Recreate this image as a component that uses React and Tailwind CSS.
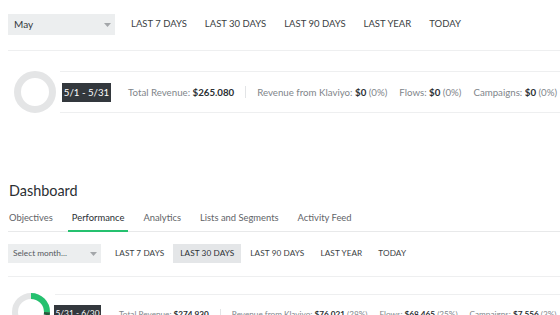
const FONT = { fontFamily: 'Lato, "Open Sans", sans-serif' }

function Ring({ size, stroke, segments = [] }) {
  const r = (size - stroke) / 2
  const c = 2 * Math.PI * r
  let offset = 0
  return (
    <svg width={size} height={size} viewBox={`0 0 ${size} ${size}`} className="flex-shrink-0">
      <circle cx={size / 2} cy={size / 2} r={r} fill="none" stroke="#e4e5e6" strokeWidth={stroke} />
      {segments.map((s, i) => {
        const len = c * s.pct
        const el = (
          <circle
            key={i}
            cx={size / 2}
            cy={size / 2}
            r={r}
            fill="none"
            stroke={s.color}
            strokeWidth={stroke}
            strokeDasharray={`${len} ${c - len}`}
            strokeDashoffset={-offset}
            transform={`rotate(-90 ${size / 2} ${size / 2})`}
          />
        )
        offset += len
        return el
      })}
    </svg>
  )
}

function Caret() {
  return (
    <svg width="7" height="4" viewBox="0 0 7 4">
      <path d="M0 0h7L3.5 4z" fill="#a3a6a9" />
    </svg>
  )
}

function Stat({ label, value, pct }) {
  return (
    <span className="whitespace-nowrap text-[#80858a]">
      {label} <b className="font-bold text-[#2b2f33]">{value}</b>
      {pct && <span> {pct}</span>}
    </span>
  )
}

const RANGES = ['LAST 7 DAYS', 'LAST 30 DAYS', 'LAST 90 DAYS', 'LAST YEAR', 'TODAY']

export default function App() {
  return (
    <div className="w-[560px] h-[315px] overflow-hidden bg-white" style={FONT}>
      {/* first state */}
      <div className="pl-[8px] pt-[14px]">
        <div className="flex items-center">
          <div className="w-[107px] h-[21px] bg-[#eceeef] flex items-center justify-between pl-[6px] pr-[4px] text-[10px] text-[#33373b]">
            May
            <Caret />
          </div>
          <div className="flex gap-[18px] ml-[16px] text-[9.5px] text-[#3a3e42]">
            {RANGES.map(r => <span key={r}>{r}</span>)}
          </div>
        </div>
        <div className="mt-[15px] h-px bg-[#eeeff0]" />
        <div className="flex items-center mt-[20px]">
          <div className="ml-[6px]">
            <Ring size={42} stroke={7} />
          </div>
          <div className="ml-[4px] flex-1 h-[42px] border-y border-[#eeeff0] flex items-center text-[9.7px] whitespace-nowrap">
            <span className="ml-[2px] bg-[#33383d] text-white w-[49px] justify-center h-[19px] flex items-center text-[9.7px]">5/1 - 5/31</span>
            <span className="ml-[17px]"><Stat label="Total Revenue:" value="$265.080" /></span>
            <span className="mx-[11px] w-px h-[12px] bg-[#e2e4e6]" />
            <Stat label="Revenue from Klaviyo:" value="$0" pct="(0%)" />
            <span className="ml-[12px]"><Stat label="Flows:" value="$0" pct="(0%)" /></span>
            <span className="ml-[12px]"><Stat label="Campaigns:" value="$0" pct="(0%)" /></span>
          </div>
        </div>
      </div>

      {/* second state */}
      <div className="mt-[68px] pl-[8px]">
        <h1 className="pl-[1px] text-[14.4px] leading-[20px] text-[#2b2f33]">Dashboard</h1>
        <div className="mt-[7px] border-b border-[#e8e9ea] flex gap-[11px] text-[9.4px] text-[#5f6468]">
          {['Objectives', 'Performance', 'Analytics', 'Lists and Segments', 'Activity Feed'].map((t, i) => (
            <span
              key={t}
              className={
                (i === 0 ? 'pl-[1px] pr-[4px] ' : 'px-[4px] ') +
                'pb-[5px] pt-[3px] border-b-2 -mb-px ' +
                (t === 'Performance' ? 'border-[#25c16f] text-[#2b2f33]' : 'border-transparent')
              }
            >
              {t}
            </span>
          ))}
        </div>
        <div className="flex items-center mt-[12px]">
          <div className="w-[93px] h-[19px] bg-[#eceeef] flex items-center justify-between pl-[5px] pr-[4px] text-[8.3px] text-[#55595d]">
            Select month...
            <Caret />
          </div>
          <div className="flex gap-[2px] ml-[7px] text-[8.2px] text-[#3a3e42] tracking-[0.1px]">
            {RANGES.map(r => (
              <span
                key={r}
                className={'h-[19px] px-[7px] flex items-center ' + (r === 'LAST 30 DAYS' ? 'bg-[#e4e6e8] text-[#2b2f33]' : '')}
              >
                {r}
              </span>
            ))}
          </div>
        </div>
        <div className="mt-[13px] h-px bg-[#eeeff0]" />
        <div className="flex items-start mt-[17px]">
          <div className="ml-[4px] -mt-px">
            <Ring
              size={38}
              stroke={6}
              segments={[
                { pct: 0.25, color: '#25c16f' },
                { pct: 0.03, color: '#1f5c3a' },
              ]}
            />
          </div>
          <div className="ml-[5px] flex-1 h-[40px] border-t border-[#eeeff0] flex items-center text-[8.2px] whitespace-nowrap">
            <span className="-mt-[2px] ml-[-1px] bg-[#33383d] text-white w-[47px] justify-center h-[17px] flex items-center text-[8.4px]">5/31 - 6/30</span>
            <span className="ml-[18px]"><Stat label="Total Revenue:" value="$274.930" /></span>
            <span className="mx-[11px] w-px h-[11px] bg-[#e2e4e6]" />
            <Stat label="Revenue from Klaviyo:" value="$76.021" pct="(28%)" />
            <span className="ml-[12px]"><Stat label="Flows:" value="$68.465" pct="(25%)" /></span>
            <span className="ml-[12px]"><Stat label="Campaigns:" value="$7.556" pct="(3%)" /></span>
          </div>
        </div>
      </div>
    </div>
  )
}
